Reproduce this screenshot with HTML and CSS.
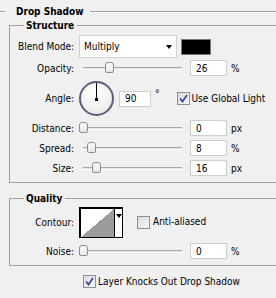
FILE: index.html
```html
<!DOCTYPE html>
<html lang="en">
<head>
  <meta charset="UTF-8" />
  <title>Drop Shadow</title>
  <link rel="stylesheet" href="styles.css">
</head>
<body>

<div class="panel">
  <div class="title">Drop Shadow</div>

  <fieldset class="group structure">
    <legend>Structure</legend>

    <div class="row blend-row">
      <label class="lbl">Blend Mode:</label>
      <div class="select">Multiply<span class="caret"></span></div>
      <div class="swatch"></div>
    </div>

    <div class="row">
      <label class="lbl">Opacity:</label>
      <div class="slider"><div class="track"><span class="thumb" style="left: 26%"></span></div></div>
      <input class="num" value="26"><span class="unit">%</span>
    </div>

    <div class="row angle-row">
      <label class="lbl">Angle:</label>
      <div class="dial"><span class="hand"></span><span class="hub"></span></div>
      <input class="num short" value="90"><span class="deg">°</span>
      <span class="check on"><svg viewBox="0 0 11 11" width="11" height="11"><path d="M2 5.5 L4.5 8.5 L9 2" /></svg></span>
      <span class="check-text">Use Global Light</span>
    </div>

    <div class="row step">
      <label class="lbl">Distance:</label>
      <div class="slider"><div class="track"><span class="thumb" style="left: 0%"></span></div></div>
      <input class="num" value="0"><span class="unit">px</span>
    </div>

    <div class="row step">
      <label class="lbl">Spread:</label>
      <div class="slider"><div class="track"><span class="thumb" style="left: 8%"></span></div></div>
      <input class="num" value="8"><span class="unit">%</span>
    </div>

    <div class="row step">
      <label class="lbl">Size:</label>
      <div class="slider"><div class="track"><span class="thumb" style="left: 13%"></span></div></div>
      <input class="num" value="16"><span class="unit">px</span>
    </div>
  </fieldset>

  <fieldset class="group quality">
    <legend>Quality</legend>

    <div class="row contour-row">
      <label class="lbl">Contour:</label>
      <div class="contour"><div class="curve"></div><div class="contour-drop"><span class="caret"></span></div></div>
      <span class="check"></span>
      <span class="check-text">Anti-aliased</span>
    </div>

    <div class="row step">
      <label class="lbl">Noise:</label>
      <div class="slider"><div class="track"><span class="thumb" style="left: 0%"></span></div></div>
      <input class="num" value="0"><span class="unit">%</span>
    </div>
  </fieldset>

  <div class="row knock-row">
    <span class="check on"><svg viewBox="0 0 11 11" width="11" height="11"><path d="M2 5.5 L4.5 8.5 L9 2" /></svg></span>
    <span class="check-text">Layer Knocks Out Drop Shadow</span>
  </div>
</div>

</body>
</html>
```

FILE: styles.css
```css
* {
  box-sizing: border-box;
}
body {
  margin: 0;
  background-color: #f0f0f0;
  font-family: "DejaVu Sans Condensed", "DejaVu Sans", sans-serif;
  font-stretch: condensed;
  font-size: 10px;
  color: #000;
  overflow: hidden;
}

.panel {
  width: 100%;
  padding-top: 5px;
}

/* section headers */
.title {
  display: flex;
  align-items: center;
  height: 13px;
  line-height: 13px;
  font-weight: bold;
}
.title::before,
.title::after {
  content: "";
  height: 0;
  border-top: 1px solid #a0a0a0;
  border-bottom: 1px solid #fff;
}
.title::before {
  width: 5px;
  margin-right: 11px;
}
.title::after {
  flex: 1;
  margin-left: 6px;
}

.group {
  margin: 0 0 0 9px;
  padding: 0;
  border: 1px solid #a0a0a0;
  border-right: none;
  min-inline-size: 0;
}
.group legend {
  margin-left: 14px;
  padding: 0 3px 0 2px;
  line-height: 13px;
  font-weight: bold;
}
.structure {
  margin-top: 1px;
  padding: 3px 0 6px;
}
.quality {
  margin-top: 9px;
  padding: 2px 0 6px;
}

/* rows */
.row {
  display: flex;
  align-items: center;
  height: 16px;
}
.lbl {
  width: 64px;
  margin-right: 5px;
  text-align: right;
  white-space: nowrap;
}
.blend-row {
  height: 23px;
}
.row + .row {
  margin-top: 2px;
}
.angle-row {
  height: 35px;
  margin-top: 5px !important;
}
.row.step {
  margin-top: 4px;
}
.contour-row {
  height: 31px;
}
.quality .row.step {
  margin-top: 5px;
}
.knock-row {
  margin-top: 9px !important;
  height: 13px;
  padding-left: 83px;
}

/* blend select */
.select {
  display: flex;
  align-items: center;
  justify-content: space-between;
  width: 98px;
  height: 23px;
  padding: 0 4px 0 4px;
  background: #fff;
  border: 1px solid #d2d2d2;
}
.caret {
  width: 0;
  height: 0;
  border-left: 3.5px solid transparent;
  border-right: 3.5px solid transparent;
  border-top: 4px solid #000;
}
.swatch {
  width: 30px;
  height: 16px;
  margin-left: 4px;
  background: #000;
  border: 1px solid #7a7a7a;
}

/* sliders */
.slider {
  width: 107px;
  padding: 0 4px;
}
.track {
  position: relative;
  height: 3px;
  border-top: 1px solid #a8a8a8;
  border-bottom: 1px solid #fff;
  background: #e4e4e4;
}
.thumb {
  position: absolute;
  top: -6px;
  width: 9px;
  height: 11px;
  margin-left: -4px;
  border: 1px solid #8c8c8c;
  border-radius: 3px 3px 2px 2px;
  background: linear-gradient(#fcfcfc, #e6e6e6);
}

.num {
  width: 37px;
  height: 16px;
  margin: 0 0 0 4px;
  padding: 0 0 0 5px;
  border: 1px solid #cdcdcd;
  background: #fff;
  font: inherit;
  color: #000;
}
.num.short {
  width: 32px;
  margin-left: 5px;
}
.unit {
  margin-left: 4px;
}
.deg {
  align-self: flex-start;
  margin: 7px 0 0 4px;
}

/* angle dial */
.dial {
  position: relative;
  width: 35px;
  height: 35px;
  border: 2px solid #56607e;
  border-radius: 50%;
  background: radial-gradient(circle at 45% 35%, #ffffff 0%, #f3f2ee 55%, #dcdcdc 100%);
}
.hand {
  position: absolute;
  left: 15px;
  top: 0;
  width: 1px;
  height: 16px;
  background: #000;
}
.hub {
  position: absolute;
  left: 14px;
  top: 15px;
  width: 3px;
  height: 3px;
  background: #000;
}

/* checkboxes */
.check {
  display: flex;
  align-items: center;
  justify-content: center;
  width: 13px;
  height: 13px;
  border: 1px solid #8e8f8f;
  background: linear-gradient(135deg, #dcdcdc, #f6f6f6);
}
.check svg path {
  fill: none;
  stroke: #3446a0;
  stroke-width: 1.7;
}
.angle-row .check {
  margin-left: 17px;
}
.check-text {
  margin-left: 2px;
  white-space: nowrap;
}
.contour-row .check {
  margin-left: 14px;
  align-self: flex-start;
  margin-top: 9px;
}
.contour-row .check-text {
  align-self: flex-start;
  margin-top: 9px;
  margin-left: 3px;
}

/* contour picker */
.contour {
  display: flex;
  height: 31px;
  border: 1px solid #000;
  box-shadow: inset 1px 1px 0 #000;
  background: #fff;
}
.curve {
  width: 33px;
  margin: 1px 0 0 1px;
  background: linear-gradient(to bottom right, #fff 50%, #9c9c9c 50%);
}
.contour-drop {
  width: 8px;
  border-left: 1px solid #000;
  padding: 6px 0 0 0;
  display: flex;
  justify-content: center;
  align-items: flex-start;
}
```
